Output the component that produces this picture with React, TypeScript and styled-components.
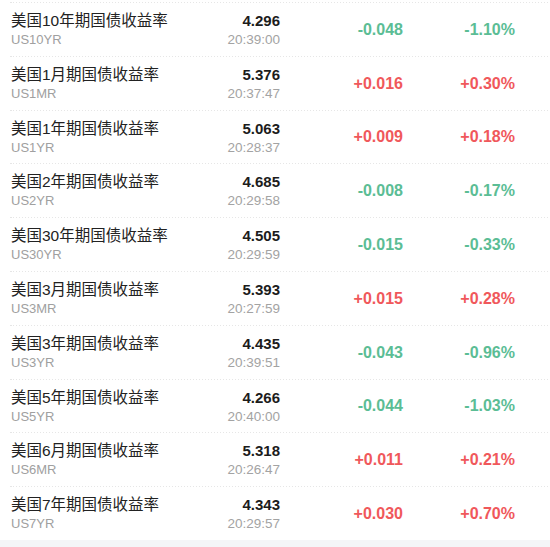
import styled, { createGlobalStyle } from 'styled-components'

const GlobalStyle = createGlobalStyle`
    html, body {
        margin: 0;
        padding: 0;
        background: #f4f5f7;
        font-family: "Liberation Sans", "Noto Sans CJK SC", Arial, sans-serif;
    }
`

const List = styled.div`
    background: #fff;
    padding-top: 2px;
`

const Row = styled.div`
    display: grid;
    grid-template-columns: minmax(0, 1fr) auto 123px 112px;
    align-items: center;
    height: 53.8px;
    box-sizing: border-box;
    padding: 0 35px 0 11px;
    position: relative;

    &::before {
        content: "";
        position: absolute;
        top: 0;
        left: 10px;
        right: 0;
        height: 1px;
        background-image: repeating-linear-gradient(90deg, #e6e6e6 0 1.5px, transparent 1.5px 3px);
    }

    &:last-child::after {
        content: "";
        position: absolute;
        bottom: -1px;
        left: 10px;
        right: 0;
        height: 1px;
        background-image: repeating-linear-gradient(90deg, #e6e6e6 0 1.5px, transparent 1.5px 3px);
    }
`

const Stack = styled.div<{ $right?: boolean }>`
    display: flex;
    flex-direction: column;
    align-items: ${p => (p.$right ? 'flex-end' : 'flex-start')};
    align-self: start;
    padding-top: 9px;
`

const Name = styled.div`
    font-size: 15.5px;
    line-height: 20px;
    color: #222;
`

const Code = styled.div`
    font-size: 13px;
    line-height: 17px;
    color: #a0a0a0;
`

const Price = styled.div`
    font-size: 15px;
    font-weight: 700;
    line-height: 20px;
    color: #1c1c1c;
`

const Time = styled.div`
    font-size: 13.5px;
    line-height: 17px;
    color: #a3a3a3;
`

const Change = styled.div<{ $up: boolean }>`
    text-align: right;
    font-size: 16px;
    font-weight: 700;
    padding-top: 2px;
    color: ${p => (p.$up ? '#f0585b' : '#5bbd95')};
`

const rows = [
    ['美国10年期国债收益率', 'US10YR', '4.296', '20:39:00', '-0.048', '-1.10%'],
    ['美国1月期国债收益率', 'US1MR', '5.376', '20:37:47', '+0.016', '+0.30%'],
    ['美国1年期国债收益率', 'US1YR', '5.063', '20:28:37', '+0.009', '+0.18%'],
    ['美国2年期国债收益率', 'US2YR', '4.685', '20:29:58', '-0.008', '-0.17%'],
    ['美国30年期国债收益率', 'US30YR', '4.505', '20:29:59', '-0.015', '-0.33%'],
    ['美国3月期国债收益率', 'US3MR', '5.393', '20:27:59', '+0.015', '+0.28%'],
    ['美国3年期国债收益率', 'US3YR', '4.435', '20:39:51', '-0.043', '-0.96%'],
    ['美国5年期国债收益率', 'US5YR', '4.266', '20:40:00', '-0.044', '-1.03%'],
    ['美国6月期国债收益率', 'US6MR', '5.318', '20:26:47', '+0.011', '+0.21%'],
    ['美国7年期国债收益率', 'US7YR', '4.343', '20:29:57', '+0.030', '+0.70%'],
]

const App = () => {
    return (
        <>
            <GlobalStyle />
            <List>
                {rows.map(([name, code, price, time, chg, pct]) => {
                    const up = chg.startsWith('+')
                    return (
                        <Row key={code}>
                            <Stack>
                                <Name>{name}</Name>
                                <Code>{code}</Code>
                            </Stack>
                            <Stack $right>
                                <Price>{price}</Price>
                                <Time>{time}</Time>
                            </Stack>
                            <Change $up={up}>{chg}</Change>
                            <Change $up={up}>{pct}</Change>
                        </Row>
                    )
                })}
            </List>
        </>
    )
}

export default App
